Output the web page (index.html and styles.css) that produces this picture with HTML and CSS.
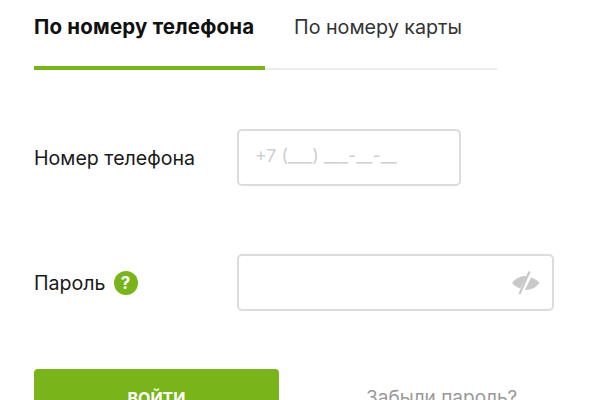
FILE: index.html
```html
<!DOCTYPE html>
<html lang="ru">
	<head>
		<meta charset="UTF-8">
		<title>Вход</title>
		<link rel="stylesheet" href="styles.css">
	</head>
	<body>
		<div class="tabs">
			<div class="tab active">По номеру телефона</div>
			<div class="tab">По номеру карты</div>
		</div>

		<div class="row phone-row">
			<div class="label">Номер телефона</div>
			<div class="field phone">+7 (___) ___-__-__</div>
		</div>

		<div class="row password-row">
			<div class="label">
				Пароль
				<span class="help">?</span>
			</div>
			<div class="field password">
				<svg class="eye" width="30" height="26" viewBox="0 0 30 26">
					<path d="M2 13 C5 9 9 6.500 14 6 C15 6 16 6 17 6.300 L10 18.500 C7 17.500 4 15.500 2 13 Z" fill="#c9c9c9"/>
					<path d="M21 7.500 C24.500 8.500 27.500 10.500 29.500 13 C26 17.500 21 20 15 20 Z" fill="#c9c9c9"/>
					<path d="M19.500 1.500 L9.500 24" stroke="#c9c9c9" stroke-width="2.200" fill="none"/>
				</svg>
			</div>
		</div>

		<div class="actions">
			<button class="login">войти</button>
			<a class="forgot" href="#">Забыли пароль?</a>
		</div>
	</body>
</html>
```

FILE: styles.css
```css
* {
	margin: 0;
	padding: 0;
	box-sizing: border-box;
}

html {
	height: 100%;
	overflow: hidden;
	background: #fff;
}

body {
	padding: 14px 0 0 34px;
	font-family: Inter, "Noto Sans", sans-serif;
	color: #1a1a1a;
}

/* вкладки */
.tabs {
	display: flex;
	width: 463px;
	height: 56px;
	border-bottom: 2px solid #ececec;
}

.tab {
	height: 56px;
	line-height: 26px;
	font-size: 19.700px;
	color: #333;
}

.tab.active {
	width: 231px;
	margin-right: 29px;
	border-bottom: 4px solid #78b41a;
	font-size: 20.500px;
	letter-spacing: .2px;
	font-weight: 700;
	color: #111;
}

/* строки формы */
.row {
	display: flex;
	align-items: center;
}

.phone-row {
	margin-top: 59px;
}

.password-row {
	margin-top: 68px;
}

.label {
	display: flex;
	align-items: center;
	gap: 8px;
	width: 203px;
	font-size: 19.600px;
}

.help {
	width: 24px;
	height: 24px;
	border-radius: 50%;
	background-color: #78b41a;
	color: #fff;
	font-size: 17px;
	font-weight: 700;
	line-height: 24px;
	text-align: center;
}

.field {
	height: 57px;
	border: 2px solid #dcdcdc;
	border-radius: 5px;
	background: #fff;
}

.phone {
	width: 224px;
	padding-left: 16px;
	line-height: 50px;
	font-size: 17.800px;
	color: #cfcfcf;
}

.password {
	display: flex;
	align-items: center;
	justify-content: flex-end;
	width: 317px;
	padding-right: 12px;
}

/* кнопка */
.actions {
	display: flex;
	margin-top: 58px;
}

.login {
	width: 245px;
	height: 58px;
	border: none;
	border-radius: 4px;
	background-color: #78b41a;
	color: #fff;
	font-family: inherit;
	font-size: 16px;
	font-weight: 700;
	text-transform: uppercase;
}

.forgot {
	margin: 17px 0 0 87px;
	font-size: 19px;
	line-height: 24px;
	color: #999;
	text-decoration: none;
}
```
